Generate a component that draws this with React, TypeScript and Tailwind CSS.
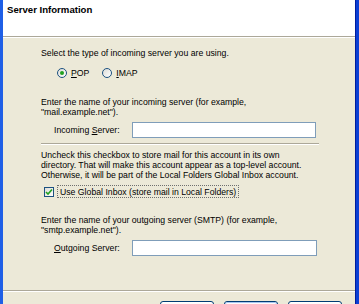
export default function App() {
  return (
    <div className="flex h-[304px] w-[359px] overflow-hidden bg-[#ECE9D8] font-['Liberation_Sans',Arial,sans-serif] text-[8.7px] leading-[10px] text-black">
      {/* window frame, left */}
      <div className="w-[3px] shrink-0 bg-[#1F5FE6]" />

      <div className="flex w-[352px] shrink-0 flex-col">
        {/* wizard header */}
        <div className="h-[36px] shrink-0 bg-white pl-[4px] pt-[5px] text-[9.6px] font-bold">Server Information</div>
        <div className="h-px shrink-0 bg-[#ACA899]" />
        <div className="h-px shrink-0 bg-white" />

        <div className="flex flex-col pl-[38px]">
          <div className="mt-[10px]">Select the type of incoming server you are using.</div>

          <div className="ml-[16px] mt-[10px] flex h-[10px] items-center">
            <Radio checked />
            <span className="ml-[4px]">
              <u>P</u>OP
            </span>
            <span className="ml-[13px]">
              <Radio />
            </span>
            <span className="ml-[4px]">
              <u>I</u>MAP
            </span>
          </div>

          <div className="mt-[19px]">
            Enter the name of your incoming server (for example,
            <br />
            "mail.example.net").
          </div>

          <div className="mt-[5px] flex items-center">
            <div className="ml-[13px] w-[78px]">
              Incoming <u>S</u>erver:
            </div>
            <div className="h-[16px] w-[184px] border border-[#7F9DB9] bg-white" />
          </div>

          <div className="mt-[5px] w-[278px]">
            <div className="h-px bg-[#ACA899]" />
            <div className="h-px bg-white" />
          </div>

          <div className="mt-[5px]">
            Uncheck this checkbox to store mail for this account in its own
            <br />
            directory. That will make this account appear as a top-level account.
            <br />
            Otherwise, it will be part of the Local Folders Global Inbox account.
          </div>

          <div className="ml-[3px] mt-[5px] flex items-center">
            <Checkbox />
            <div className="ml-[3px] flex h-[13px] items-center whitespace-nowrap border border-dotted border-[#6F6F6F] pl-[2px] pr-[2px]">
              Use Global Inbox (store mail in Local Folders)
            </div>
          </div>

          <div className="mt-[17px]">
            Enter the name of your outgoing server (SMTP) (for example,
            <br />
            "smtp.example.net").
          </div>

          <div className="mt-[5px] flex items-center">
            <div className="ml-[13px] w-[78px]">
              <u>O</u>utgoing Server:
            </div>
            <div className="h-[16px] w-[185px] border border-[#7F9DB9] bg-white" />
          </div>
        </div>

        <div className="mt-[34px] shrink-0">
          <div className="h-px bg-[#ACA899]" />
          <div className="h-px bg-white" />
        </div>

        {/* wizard buttons, only their top edge is in view */}
        <div className="mt-[9px] flex justify-end gap-[10px] pr-[13px]">
          <Button />
          <Button focused />
          <Button />
        </div>
      </div>

      {/* window frame, right */}
      <div className="w-[4px] shrink-0 border-l border-[#001C9C] bg-[#0B3FD4]" />
    </div>
  );
}

function Radio({ checked = false }: { checked?: boolean }) {
  return (
    <div className="flex h-[10px] w-[10px] items-center justify-center rounded-full border border-[#1C5180] bg-gradient-to-br from-[#DCDCD7] to-white">
      {checked && <div className="h-[4px] w-[4px] rounded-full bg-[#21A121]" />}
    </div>
  );
}

function Checkbox() {
  return (
    <div className="flex h-[10px] w-[10px] items-center justify-center border border-[#1C5180] bg-gradient-to-br from-[#DCDCD7] to-white">
      <svg width="8" height="8" viewBox="0 0 8 8">
        <path d="M1 4 L3 6 L7 1.5" fill="none" stroke="#21A121" strokeWidth="1.6" />
      </svg>
    </div>
  );
}

function Button({ focused = false }: { focused?: boolean }) {
  return (
    <div className="h-[17px] w-[54px] shrink-0 rounded-[3px] border border-[#003C74] bg-gradient-to-b from-white to-[#ECEBE6]">
      {focused && <div className="h-full w-full rounded-[2px] border border-[#A8C5F0]" />}
    </div>
  );
}
